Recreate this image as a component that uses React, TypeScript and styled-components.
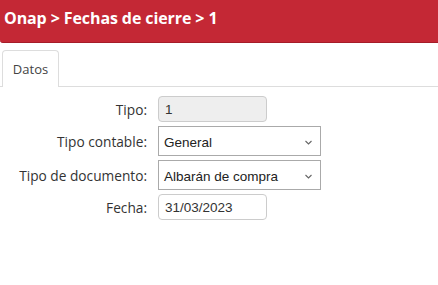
import React from "react";
import styled, { createGlobalStyle } from "styled-components";

const GlobalStyle = createGlobalStyle`
  body {
    margin: 0;
    background: #fff;
    font-family: "Open Sans", "DejaVu Sans", sans-serif;
  }
`;

const Header = styled.header`
  height: 43px;
  background-color: #c42835;
  border-bottom: 1px solid #a51d29;
  border-bottom-left-radius: 3px;
  display: flex;
  align-items: center;
  padding: 0 4px 6px;
  box-sizing: border-box;
`;

const Title = styled.h1`
  margin: 0;
  color: #fff;
  font-size: 16px;
  font-weight: 700;
  letter-spacing: -0.1px;
`;

const TabBar = styled.nav`
  display: flex;
  margin-top: 7px;
  padding-left: 2px;
  border-bottom: 1px solid #ddd;
`;

const Tab = styled.div`
  width: 57px;
  height: 37px;
  box-sizing: border-box;
  border: 1px solid #ddd;
  border-bottom: none;
  border-radius: 4px 4px 0 0;
  margin-bottom: -1px;
  background: #fff;
  display: flex;
  align-items: center;
  justify-content: center;
  font-size: 13px;
  color: #444;
`;

const Form = styled.form`
  display: grid;
  grid-template-columns: 147px auto;
  column-gap: 11px;
  row-gap: 4px;
  padding-top: 9px;
  align-items: center;
  justify-items: start;
`;

const Label = styled.label`
  justify-self: end;
  font-size: 13.7px;
  color: #333;
`;

const TextInput = styled.input`
  width: 109px;
  height: 26px;
  box-sizing: border-box;
  border: 1px solid #ccc;
  border-radius: 4px;
  padding: 0 6px;
  font-family: "Liberation Sans", Arial, sans-serif;
  font-size: 13.5px;
  color: #333;
  background: ${(p) => (p.readOnly ? "#eee" : "#fff")};
  outline: none;
`;

const SelectBox = styled.div`
  width: 163px;
  height: 30px;
  box-sizing: border-box;
  border: 1px solid #aaa;
  display: flex;
  align-items: center;
  justify-content: space-between;
  padding: 2px 8px 0 5px;
  font-family: "Liberation Sans", Arial, sans-serif;
  font-size: 13.5px;
  color: #222;
`;

const Chevron = () => (
  <svg width="7" height="5" viewBox="0 0 7 5">
    <path d="M0.5 1 L3.5 4 L6.5 1" fill="none" stroke="#666" strokeWidth="1.1" />
  </svg>
);

export default function App() {
  return (
    <>
      <GlobalStyle />
      <Header>
        <Title>Onap &gt; Fechas de cierre &gt; 1</Title>
      </Header>
      <TabBar>
        <Tab>Datos</Tab>
      </TabBar>
      <Form>
        <Label>Tipo:</Label>
        <TextInput readOnly value="1" />
        <Label>Tipo contable:</Label>
        <SelectBox>
          General <Chevron />
        </SelectBox>
        <Label>Tipo de documento:</Label>
        <SelectBox>
          Albarán de compra <Chevron />
        </SelectBox>
        <Label>Fecha:</Label>
        <TextInput defaultValue="31/03/2023" />
      </Form>
    </>
  );
}
